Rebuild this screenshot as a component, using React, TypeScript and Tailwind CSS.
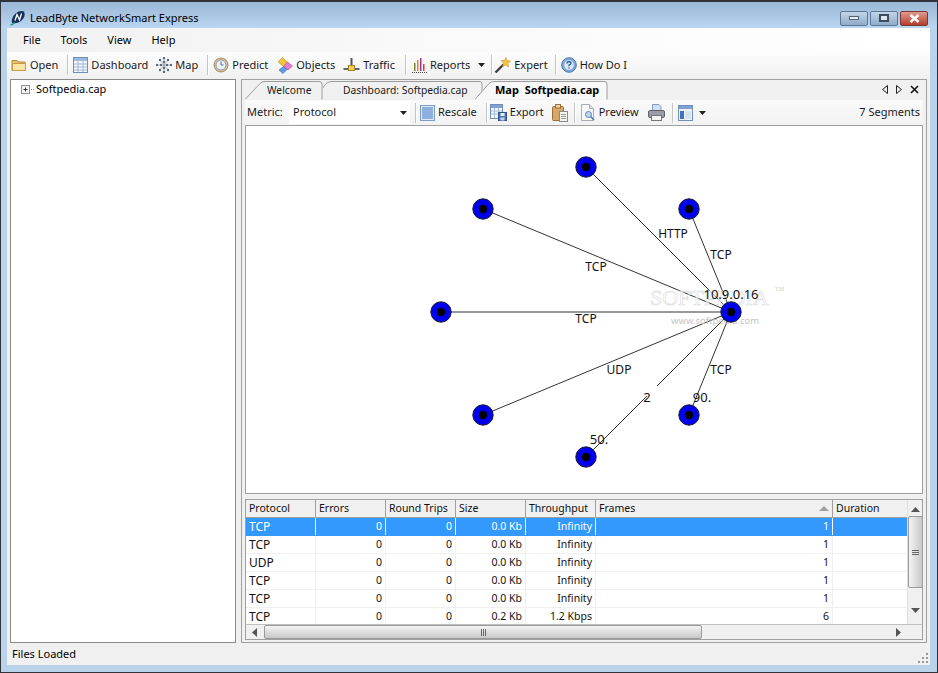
import type { ReactNode } from 'react';

const uiFont = "font-['Noto_Sans','Open_Sans',sans-serif]";

const rows = [
  ['TCP', '0', '0', '0.0 Kb', 'Infinity', '1', ''],
  ['TCP', '0', '0', '0.0 Kb', 'Infinity', '1', ''],
  ['UDP', '0', '0', '0.0 Kb', 'Infinity', '1', ''],
  ['TCP', '0', '0', '0.0 Kb', 'Infinity', '1', ''],
  ['TCP', '0', '0', '0.0 Kb', 'Infinity', '1', ''],
  ['TCP', '0', '0', '0.2 Kb', '1.2 Kbps', '6', ''],
];

const headers = ['Protocol', 'Errors', 'Round Trips', 'Size', 'Throughput', 'Frames', 'Duration'];

const nodes = [
  [586, 167],
  [689, 209],
  [483, 209],
  [441, 312],
  [483, 415],
  [586, 457],
  [689, 415],
];

const labels: [string, number, number][] = [
  ['HTTP', 673, 238],
  ['TCP', 721, 259],
  ['TCP', 596, 271],
  ['TCP', 586, 323],
  ['UDP', 619, 374],
  ['TCP', 721, 374],
];

function Logo() {
  return (
    <svg width="16" height="16" viewBox="0 0 16 16" className="shrink-0">
      <path d="M2 13 Q1 8 5 4 Q9 0 14 1.5 Q16 6 12 10 Q8 14 2 13 Z" fill="#17315f" />
      <path d="M5 10.5 L7 4.5 L9.5 10 L11.5 3.5" fill="none" stroke="#fff" strokeWidth="1.3" />
      <path d="M0.5 15 Q3 14.5 5 12.5" fill="none" stroke="#2f9a86" strokeWidth="1.6" />
    </svg>
  );
}

function FolderIcon() {
  return (
    <svg width="16" height="16" viewBox="0 0 16 16">
      <path d="M1 3.5 H6 L7 5 H14 V13.5 H1 Z" fill="#e8c26a" stroke="#b98a35" />
      <path d="M1.5 6.5 H14.5 V13.5 H1.5 Z" fill="#fbe6a6" stroke="#c79a45" />
    </svg>
  );
}

function SheetIcon() {
  return (
    <svg width="15" height="16" viewBox="0 0 15 16">
      <rect x="0.5" y="0.5" width="14" height="15" fill="#f5f8fd" stroke="#6f8fb8" />
      <rect x="1" y="1" width="13" height="3" fill="#9db9dc" />
      <path d="M1 7 H14 M1 10 H14 M1 13 H14 M5 4 V15 M10 4 V15" stroke="#9fb6d4" />
    </svg>
  );
}

function MapIcon() {
  const dots = [
    [8, 1], [4, 3], [12, 3], [8, 5], [1, 8], [5, 8], [11, 8], [15, 8], [8, 11], [4, 13], [12, 13], [8, 15],
  ];
  return (
    <svg width="16" height="16" viewBox="0 0 16 16">
      <path d="M8 1 V15 M1 8 H15 M4 3 L12 13 M12 3 L4 13" stroke="#8a94a3" strokeWidth="0.6" />
      {dots.map(([x, y], i) => (
        <circle key={i} cx={x} cy={y} r="1.2" fill="#56657a" />
      ))}
    </svg>
  );
}

function ClockIcon() {
  return (
    <svg width="16" height="16" viewBox="0 0 16 16">
      <circle cx="8" cy="8" r="7" fill="#d8c09a" stroke="#a98a5c" />
      <circle cx="8" cy="8" r="5" fill="#eef3fa" stroke="#8f9db0" />
      <path d="M8 4.5 V8 H10.5" fill="none" stroke="#4e6a94" />
    </svg>
  );
}

function ObjectsIcon() {
  return (
    <svg width="17" height="17" viewBox="0 0 17 17">
      <path d="M6.5 0.5 L11.5 5 L7.5 9.5 L2 5 Z" fill="#f0c43c" stroke="#b98f1f" strokeWidth="0.6" />
      <path d="M11.5 5 L16.5 9 L12 13 L7.5 9.5 Z" fill="#e77fd0" stroke="#a94f95" strokeWidth="0.6" />
      <path d="M7.5 9.5 L11 12.5 L7 16.5 L3 13 Z" fill="#5f9be6" stroke="#3a6bb0" strokeWidth="0.6" />
    </svg>
  );
}

function TrafficIcon() {
  return (
    <svg width="17" height="16" viewBox="0 0 17 16">
      <path d="M8.5 1 V9" stroke="#555" strokeWidth="2" />
      <path d="M0.5 12 H16.5" stroke="#666" strokeWidth="2" />
      <rect x="5.5" y="8.5" width="6" height="5" fill="#f2cf55" stroke="#a5862a" />
    </svg>
  );
}

function ReportsIcon() {
  return (
    <svg width="15" height="16" viewBox="0 0 15 16">
      <rect x="2" y="6" width="1.5" height="8" fill="#7a8a2a" />
      <rect x="5" y="3" width="1.5" height="11" fill="#d88a20" />
      <rect x="8" y="1" width="1.5" height="13" fill="#a0358f" />
      <rect x="11" y="7" width="1.5" height="7" fill="#d24040" />
      <path d="M0 15.5 H15" stroke="#444" strokeDasharray="1 1" />
    </svg>
  );
}

function WandIcon() {
  return (
    <svg width="17" height="17" viewBox="0 0 17 17">
      <path d="M1.5 15.5 L9.5 7.5" stroke="#3c3c44" strokeWidth="2.4" />
      <path d="M12 0.5 L13 3.5 L16.5 4 L14 6.5 L14.5 10 L11.5 8 L8.5 9.5 L9.5 6 L7 3.5 L10.5 3.5 Z" fill="#f2c53f" stroke="#b98a20" strokeWidth="0.5" />
    </svg>
  );
}

function HelpIcon() {
  return (
    <svg width="16" height="16" viewBox="0 0 16 16">
      <circle cx="8" cy="8" r="7.3" fill="#7fa6d8" stroke="#4f77ad" />
      <circle cx="8" cy="8" r="4.8" fill="#dbe8f7" />
      <path d="M6 6.5 Q6 4.8 8 4.8 Q10 4.8 10 6.3 Q10 7.4 8 8.2 V9.3 M8 10.4 V11.6" fill="none" stroke="#2f5f9e" strokeWidth="1.4" />
    </svg>
  );
}

function RescaleIcon() {
  return (
    <svg width="15" height="16" viewBox="0 0 15 16">
      <rect x="0.5" y="0.5" width="14" height="15" fill="#dfe9f6" stroke="#7d9cc6" />
      <rect x="2" y="2" width="11" height="12" fill="#8fb0de" />
    </svg>
  );
}

function ExportIcon() {
  return (
    <svg width="17" height="17" viewBox="0 0 17 17">
      <rect x="0.5" y="0.5" width="12" height="14" fill="#f2f6fc" stroke="#6f8fb8" />
      <rect x="1" y="1" width="11" height="3" fill="#7fa3d0" />
      <path d="M1 7 H12 M1 10 H12 M4.5 4 V14 M8.5 4 V14" stroke="#a5bcd9" />
      <rect x="8.5" y="8.5" width="8" height="8" fill="#4f78b5" stroke="#2f5288" />
      <rect x="10.5" y="9" width="4" height="3" fill="#e7eef8" />
      <rect x="10.5" y="13.5" width="4" height="3" fill="#c7d4e6" />
    </svg>
  );
}

function ClipboardIcon() {
  return (
    <svg width="16" height="18" viewBox="0 0 16 18">
      <rect x="0.5" y="2.5" width="11" height="14" rx="1" fill="#d9a868" stroke="#9a7038" />
      <rect x="3.5" y="0.5" width="5" height="3.5" fill="#e9d6b0" stroke="#9a7038" />
      <rect x="7.5" y="7.5" width="8" height="10" fill="#f4f4f4" stroke="#8a8a8a" />
      <path d="M9 10.5 H14 M9 12.5 H14 M9 14.5 H14" stroke="#9a9a9a" />
    </svg>
  );
}

function PreviewIcon() {
  return (
    <svg width="16" height="17" viewBox="0 0 16 17">
      <path d="M1.5 0.5 H9.5 L13.5 4.5 V16.5 H1.5 Z" fill="#f6f7f9" stroke="#a8adb5" />
      <path d="M9.5 0.5 V4.5 H13.5" fill="#dde3ea" stroke="#a8adb5" />
      <circle cx="8.5" cy="10.5" r="3" fill="#bcd5f0" stroke="#5f86b8" />
      <path d="M10.5 12.5 L14 16" stroke="#4f78b5" strokeWidth="1.6" />
    </svg>
  );
}

function PrintIcon() {
  return (
    <svg width="17" height="17" viewBox="0 0 17 17">
      <path d="M4.5 0.5 H11 L13 2.5 V7 H4.5 Z" fill="#cfe0f4" stroke="#7d9cc6" />
      <rect x="0.5" y="6.5" width="16" height="7" rx="1.5" fill="#9a9da3" stroke="#5f6268" />
      <rect x="3.5" y="11.5" width="10" height="5" fill="#f4f4f4" stroke="#777" />
    </svg>
  );
}

function LayoutIcon() {
  return (
    <svg width="15" height="16" viewBox="0 0 15 16">
      <rect x="0.5" y="0.5" width="14" height="15" fill="#eef3fa" stroke="#6f8fb8" />
      <rect x="1" y="1" width="13" height="3" fill="#7fa3d0" />
      <rect x="2" y="6" width="4" height="8" fill="#3f75b8" />
      <rect x="7" y="6" width="6" height="8" fill="#d7e2f0" />
    </svg>
  );
}

function Arrow() {
  return (
    <svg width="7" height="4" viewBox="0 0 7 4" className="shrink-0 block">
      <path d="M0 0 H7 L3.5 4 Z" fill="#222" />
    </svg>
  );
}

function Sep({ className }: { className: string }) {
  return <div className={`w-px h-[20px] bg-[#c4c4c4] border-r border-white box-content shrink-0 ${className}`} />;
}

function Tool({ icon, label, className }: { icon: ReactNode; label: string; className: string }) {
  return (
    <div className={`flex items-center gap-[3px] shrink-0 ${className}`}>
      {icon}
      <span>{label}</span>
    </div>
  );
}

function Tab({ label, width, path, active, textClass }: { label: string; width: number; path: string; active?: boolean; textClass: string }) {
  return (
    <div className="relative h-[20px] shrink-0" style={{ width }}>
      <svg width={width} height="20" viewBox={`0 0 ${width} 20`} className="absolute inset-0">
        <path d={path} fill={active ? '#f8f8f8' : '#f1f1f1'} stroke="#9c9c9c" />
      </svg>
      <span className={`absolute top-0 leading-[20px] whitespace-pre ${textClass} ${active ? 'font-bold text-black' : 'text-[10.3px]'}`}>{label}</span>
    </div>
  );
}

function Chart() {
  return (
    <svg viewBox="246 126 678 367" width="678" height="367" className={`block ${uiFont}`}>
      <g stroke="#333" strokeWidth="1">
        <line x1="731" y1="312" x2="586" y2="167" />
        <line x1="731" y1="312" x2="689" y2="209" />
        <line x1="731" y1="312" x2="483" y2="209" />
        <line x1="731" y1="312" x2="441" y2="312" />
        <line x1="731" y1="312" x2="483" y2="415" />
        <line x1="731" y1="312" x2="657" y2="386" />
        <line x1="647" y1="396" x2="586" y2="457" />
        <line x1="731" y1="312" x2="689" y2="415" />
      </g>
      <g className="font-['Liberation_Serif',serif]">
        <text x="650" y="305" fontSize="22" fill="#ffffff" fillOpacity="0.6" stroke="#e0e0e0" strokeWidth="0.7">SOFTPEDIA</text>
        <text x="775" y="291" fontSize="6" fill="#ccc">TM</text>
      </g>
      <text x="671" y="324" fontSize="9.5" fill="#c4c4c4">www.softpedia.com</text>
      <g fontSize="12" fill="#111">
        {labels.map(([t, x, y], i) => (
          <text key={i} x={x} y={y} textAnchor="middle">{t}</text>
        ))}
      </g>
      <g fontSize="13" fill="#111">
        <text x="647" y="402" textAnchor="middle">2</text>
        <text x="702" y="402" textAnchor="middle">90.</text>
        <text x="599" y="444" textAnchor="middle">50.</text>
      </g>
      {nodes.concat([[731, 312]]).map(([x, y], i) => (
        <g key={i}>
          <circle cx={x} cy={y} r="10.2" fill="#0000f0" stroke="#1a1a2a" strokeWidth="1" />
          <circle cx={x} cy={y} r="4.2" fill="#000" />
        </g>
      ))}
      <text x="731" y="299" textAnchor="middle" fontSize="13" fill="#111">10.9.0.16</text>
    </svg>
  );
}

function DataGrid() {
  return (
    <div className="flex flex-col h-[141px] mt-[5px] border border-[#a0a0a0] text-[10.5px] text-[#111] bg-white overflow-hidden">
      <div className="flex h-[124px]">
        <div className="w-[661px] shrink-0 overflow-hidden">
          <div className="grid grid-cols-[70px_70px_70px_70px_70px_237px_75px] h-[18px] bg-[#f0f0f0] border-b border-[#a0a0a0]">
            {headers.map((h, i) => (
              <div key={h} className={`relative leading-[17px] pl-[3px] border-r border-[#a0a0a0] ${i === 6 ? 'border-r-0' : ''}`}>
                {h}
                {h === 'Frames' && (
                  <svg width="10" height="5" viewBox="0 0 10 5" className="absolute right-[3px] top-[6px]">
                    <path d="M0 5 L5 0 L10 5 Z" fill="#a0a0a0" />
                  </svg>
                )}
              </div>
            ))}
          </div>
          {rows.map((row, r) => (
            <div
              key={r}
              className={`grid grid-cols-[70px_70px_70px_70px_70px_237px_75px] h-[18px] border-b ${r === 0 ? 'bg-[#3399ff] text-white border-[#3399ff]' : 'border-[#f0f0f0]'}`}
            >
              {row.map((c, i) => (
                <div
                  key={i}
                  className={`leading-[17px] px-[3px] border-r ${i === 0 ? 'text-left text-[12px]' : 'text-right'} ${r === 0 ? 'border-white' : 'border-[#f0f0f0]'}`}
                >
                  {c}
                </div>
              ))}
            </div>
          ))}
        </div>
        <div className="flex-1 flex flex-col items-center bg-[#f0f0f0] border-l border-[#e0e0e0]">
          <svg width="9" height="5" viewBox="0 0 9 5" className="mt-[7px] shrink-0">
            <path d="M0 5 L4.5 0 L9 5 Z" fill="#555" />
          </svg>
          <div className="mt-[4px] w-[15px] h-[72px] rounded-[2px] border border-[#9a9a9a] bg-gradient-to-r from-[#f4f4f4] to-[#c8c8c8] flex flex-col items-center justify-center gap-[1px]">
            <div className="w-[7px] h-px bg-[#666]" />
            <div className="w-[7px] h-px bg-[#666]" />
            <div className="w-[7px] h-px bg-[#666]" />
          </div>
          <svg width="9" height="5" viewBox="0 0 9 5" className="mt-[20px] shrink-0">
            <path d="M0 0 H9 L4.5 5 Z" fill="#555" />
          </svg>
        </div>
      </div>
      <div className="flex items-center h-[15px] bg-[#f0f0f0] border-t border-[#c0c0c0]">
        <svg width="5" height="9" viewBox="0 0 5 9" className="ml-[6px] shrink-0">
          <path d="M5 0 V9 L0 4.5 Z" fill="#555" />
        </svg>
        <div className="ml-[7px] w-[438px] h-[14px] rounded-[2px] border border-[#9a9a9a] bg-gradient-to-b from-[#f4f4f4] to-[#c8c8c8] flex items-center justify-center gap-[1px]">
          <div className="w-px h-[7px] bg-[#666]" />
          <div className="w-px h-[7px] bg-[#666]" />
          <div className="w-px h-[7px] bg-[#666]" />
        </div>
        <svg width="5" height="9" viewBox="0 0 5 9" className="ml-[194px] shrink-0">
          <path d="M0 0 V9 L5 4.5 Z" fill="#555" />
        </svg>
      </div>
    </div>
  );
}

export default function App() {
  return (
    <div className={`relative w-[938px] h-[673px] overflow-hidden bg-[#b9d3ea] border border-[#30343a] border-t-2 flex flex-col text-[11px] text-[#1a1a1a] ${uiFont}`}>
      {/* Title bar */}
      <div className="h-[26px] shrink-0 flex items-center pt-[6px] pl-[9px] pr-[9px] bg-gradient-to-b from-[#9ab7d6] to-[#bad6f1]">
        <Logo />
        <span className="ml-[4px] text-black">LeadByte NetworkSmart Express</span>
        <div className="ml-auto flex gap-[2px]">
          <div className="w-[28px] h-[15px] rounded-[2px] border border-[#5b7595] bg-gradient-to-b from-[#c4d6e8] to-[#8fabc9] flex items-center justify-center">
            <div className="w-[10px] h-[4px] bg-[#e6eef6] border border-[#50647c]" />
          </div>
          <div className="w-[28px] h-[15px] rounded-[2px] border border-[#5b7595] bg-gradient-to-b from-[#c4d6e8] to-[#8fabc9] flex items-center justify-center">
            <div className="w-[10px] h-[8px] border-2 border-[#3d4c60] bg-[#dbe6f1]" />
          </div>
          <div className="w-[28px] h-[15px] rounded-[2px] border border-[#7a3a34] bg-gradient-to-b from-[#e09a8c] to-[#b43c2e] flex items-center justify-center">
            <svg width="11" height="9" viewBox="0 0 11 9">
              <path d="M1.5 1 L9.5 8 M9.5 1 L1.5 8" stroke="#fff" strokeWidth="2.4" />
            </svg>
          </div>
        </div>
      </div>

      {/* Client area */}
      <div className="mx-[6px] w-[923px] h-[637px] shrink-0 bg-[#f0f0f0] flex flex-col">
        <div className="h-[24px] shrink-0 flex items-center pl-[16px] gap-[20px] bg-gradient-to-r from-[#f1f1f1] via-[#fafafa] to-[#ffffff] text-black">
          <span>File</span>
          <span>Tools</span>
          <span>View</span>
          <span>Help</span>
        </div>

        <div className="h-[26px] shrink-0 flex items-center pl-[4px] bg-gradient-to-b from-[#fdfdfd] to-[#f1f1f1]">
          <Tool icon={<FolderIcon />} label="Open" className="" />
          <Sep className="ml-[9px]" />
          <Tool icon={<SheetIcon />} label="Dashboard" className="ml-[4px]" />
          <Tool icon={<MapIcon />} label="Map" className="ml-[8px]" />
          <Sep className="ml-[9px]" />
          <Tool icon={<ClockIcon />} label="Predict" className="ml-[4px]" />
          <Tool icon={<ObjectsIcon />} label="Objects" className="ml-[8px]" />
          <Tool icon={<TrafficIcon />} label="Traffic" className="ml-[8px]" />
          <Sep className="ml-[10px]" />
          <Tool icon={<ReportsIcon />} label="Reports" className="ml-[5px]" />
          <div className="ml-[8px]"><Arrow /></div>
          <Sep className="ml-[6px]" />
          <Tool icon={<WandIcon />} label="Expert" className="ml-[1px]" />
          <Sep className="ml-[7px]" />
          <Tool icon={<HelpIcon />} label="How Do I" className="ml-[4px]" />
        </div>

        <div className="flex-1 flex min-h-0 pl-[3px] pr-[2px] pt-px">
          {/* Tree */}
          <div className="w-[226px] h-[564px] shrink-0 bg-white border border-[#8a8a8a] flex items-start pt-[1px] pl-[10px]">
            <div className="flex items-center h-[16px]">
              <svg width="13" height="9" viewBox="0 0 13 9" className="shrink-0">
                <rect x="0.5" y="0.5" width="8" height="8" fill="#f4f4f4" stroke="#8f8f8f" />
                <path d="M2.5 4.5 H6.5 M4.5 2.5 V6.5" stroke="#333" />
                <path d="M10 4.5 H13" stroke="#999" strokeDasharray="1 1" />
              </svg>
              <span className="ml-[2px] text-black">Softpedia.cap</span>
            </div>
          </div>

          {/* Document panel */}
          <div className="ml-[5px] w-[686px] h-[564px] shrink-0 border border-[#a0a0a0] bg-[#f0f0f0] flex flex-col px-[3px]">
            <div className="h-[20px] shrink-0 flex items-end relative">
              <Tab label="Welcome" width={78} textClass="left-[22px]" path="M0 19.5 L15 3.5 Q17 1.5 20 1.5 H74 Q77 1.5 77 4 V19.5" />
              <Tab label="Dashboard: Softpedia.cap" width={160} textClass="left-[20px]" path="M0 8 Q3 1.5 9 1.5 H157 Q159 1.5 159 4 V12" />
              <div className="-ml-[8px]">
                <Tab active label="Map  Softpedia.cap" width={134} textClass="left-[20px]" path="M0 19.5 L14 3.5 Q16 1.5 19 1.5 H129 Q132 1.5 132 4 V19.5" />
              </div>
              <div className="absolute right-[4px] top-[5px] flex items-center gap-[8px]">
                <svg width="6" height="9" viewBox="0 0 6 9"><path d="M5.5 0.5 V8.5 L0.5 4.5 Z" fill="none" stroke="#222" /></svg>
                <svg width="6" height="9" viewBox="0 0 6 9"><path d="M0.5 0.5 V8.5 L5.5 4.5 Z" fill="none" stroke="#222" /></svg>
                <svg width="9" height="9" viewBox="0 0 9 9"><path d="M1 1 L8 8 M8 1 L1 8" stroke="#111" strokeWidth="1.6" /></svg>
              </div>
            </div>

            <div className="h-[25px] shrink-0 flex items-center bg-gradient-to-b from-[#fafafa] to-[#f2f2f2] pl-[2px]">
              <span className="w-[37px]">Metric:</span>
              <div className="ml-[5px] w-[121px] h-[23px] bg-white flex items-center pl-[4px] pr-[3px]">
                <span className="flex-1">Protocol</span>
                <Arrow />
              </div>
              <Sep className="ml-[5px]" />
              <Tool icon={<RescaleIcon />} label="Rescale" className="ml-[3px]" />
              <Sep className="ml-[9px]" />
              <Tool icon={<ExportIcon />} label="Export" className="ml-[2px]" />
              <div className="ml-[8px] flex"><ClipboardIcon /></div>
              <Sep className="ml-[6px]" />
              <Tool icon={<PreviewIcon />} label="Preview" className="ml-[4px]" />
              <div className="ml-[9px] flex"><PrintIcon /></div>
              <Sep className="ml-[7px]" />
              <div className="ml-[4px] flex"><LayoutIcon /></div>
              <div className="ml-[6px]"><Arrow /></div>
              <span className="ml-auto mr-[3px]">7 Segments</span>
            </div>

            <div className="h-[369px] shrink-0 border border-[#a0a0a0] bg-white overflow-hidden">
              <Chart />
            </div>

            <DataGrid />
          </div>
        </div>

        {/* Status bar */}
        <div className="relative h-[22px] shrink-0 flex items-center pl-[5px] text-black">
          Files Loaded
          <svg width="11" height="11" viewBox="0 0 11 11" className="absolute right-[1px] bottom-[1px]">
            <g fill="#9a9a9a">
              <rect x="8" y="0" width="2" height="2" />
              <rect x="4" y="4" width="2" height="2" />
              <rect x="8" y="4" width="2" height="2" />
              <rect x="0" y="8" width="2" height="2" />
              <rect x="4" y="8" width="2" height="2" />
              <rect x="8" y="8" width="2" height="2" />
            </g>
          </svg>
        </div>
      </div>
    </div>
  );
}
